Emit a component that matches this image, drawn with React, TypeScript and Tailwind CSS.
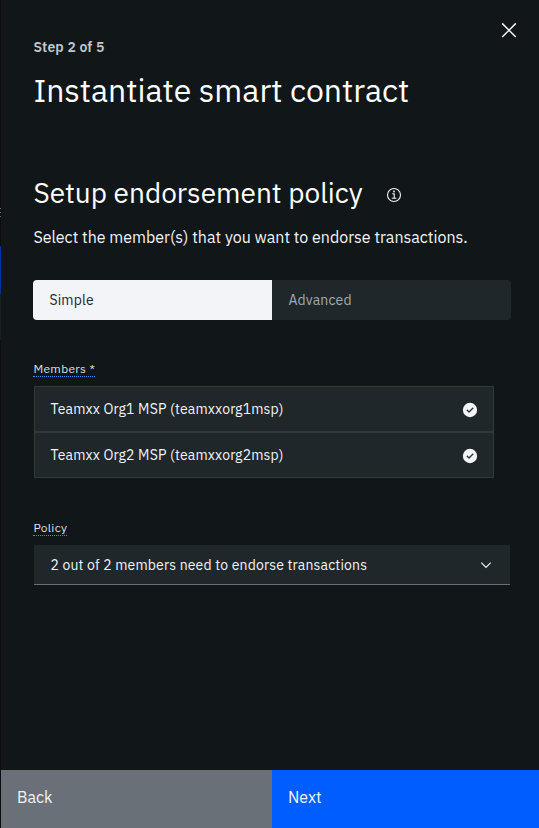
import React from "react";

function CheckmarkFilled() {
  return (
    <svg width="16" height="16" viewBox="0 0 32 32" className="mt-[2px] shrink-0">
      <circle cx="16" cy="16" r="14.3" fill="#f2f4f8" />
      <path d="M14 21.6l-5-5 1.6-1.6 3.4 3.4 7.4-7.4 1.6 1.6z" fill="#21272a" stroke="#21272a" strokeWidth=".5" />
    </svg>
  );
}

function Member({ name }: { name: string }) {
  return (
    <div className="flex h-[46px] items-center justify-between border border-[#32393d] bg-[#20272a] pl-[15.4px] pr-[15px]">
      <span className="text-sm tracking-[0.16px]">{name}</span>
      <CheckmarkFilled />
    </div>
  );
}

function PageEdge() {
  return (
    <div className="flex w-px shrink-0 flex-col bg-[#0a0c0e]">
      <div className="mt-[208px] h-px bg-[#6b7076]" />
      <div className="mt-[3px] h-px bg-[#6b7076]" />
      <div className="mt-[3px] h-px bg-[#6b7076]" />
      <div className="mt-[29px] h-[48px] bg-[#00309a]" />
      <div className="h-[46px] bg-[#1a1e21]" />
    </div>
  );
}

export default function App() {
  return (
    <div className="flex h-[828px] w-[539px] overflow-hidden bg-[#111618] font-['IBM_Plex_Sans',Roboto,sans-serif] text-[#f2f4f8]">
      <PageEdge />
      <main className="flex min-w-0 flex-1 flex-col">
        <header className="flex h-[175px] shrink-0 justify-between pl-[32.4px]">
          <div className="pt-[38px]">
            <p className="text-sm leading-[18px] font-semibold tracking-[0.16px] text-[#c1c7cd]">Step 2 of 5</p>
            <h1 className="mt-[14px] text-[32px] leading-10 whitespace-nowrap text-white">Instantiate smart contract</h1>
          </div>
          <button aria-label="Close" className="mt-[20px] mr-[20px] size-5">
            <svg width="20" height="20" viewBox="0 0 20 20" stroke="#f2f4f8" strokeWidth="1.5" fill="none">
              <path d="M3.2 3.4l13.6 13.6M16.8 3.4L3.2 17" />
            </svg>
          </button>
        </header>
        <section className="flex-1 pr-7 pl-8">
          <div className="flex h-9 items-center">
            <h2 className="w-[329px] pl-[0.4px] text-[28px] leading-9 whitespace-nowrap text-white">Setup endorsement policy</h2>
            <svg width="16" height="16" viewBox="0 0 16 16" className="mt-[3px] ml-6" fill="none" stroke="#f2f4f8" strokeWidth="1.1">
              <circle cx="8" cy="8" r="6.5" />
              <path d="M6.2 6.8H8.2V11.2M5.8 11.3H10.4" />
              <circle cx="8" cy="4.5" r=".9" fill="#f2f4f8" stroke="none" />
            </svg>
          </div>
          <p className="mt-[14px] pl-[0.4px] text-base leading-6 whitespace-nowrap">Select the member(s) that you want to endorse transactions.</p>
          <div className="mt-[31px] flex h-10 overflow-hidden rounded text-sm tracking-[0.16px]">
            <button className="flex flex-1 items-center bg-[#f2f4f8] pl-[16.4px] text-[#21272a]"><span>Simple</span></button>
            <button className="flex flex-1 items-center bg-[#20272a] pl-[16.4px] text-[#a2a9b0]"><span>Advanced</span></button>
          </div>
          <div className="mt-[41px] flex h-4 items-start pl-[0.4px]">
            <span className="border-b border-dotted border-[#4589ff] text-xs leading-[15px] tracking-[0.32px] text-[#dde1e6]">Members *</span>
          </div>
          <div className="mt-[9px] ml-px w-[460px]">
            <Member name="Teamxx Org1 MSP (teamxxorg1msp)" />
            <Member name="Teamxx Org2 MSP (teamxxorg2msp)" />
          </div>
          <div className="mt-[42px] flex h-4 items-start pl-[0.4px]">
            <span className="border-b border-dotted border-[#4589ff] text-xs leading-[15px] tracking-[0.32px] text-[#dde1e6]">Policy</span>
          </div>
          <div className="mt-[9px] ml-px flex h-10 w-[476px] items-center justify-between border-b border-[#697077] bg-[#20272a] pr-4 pl-[16.4px] text-sm tracking-[0.16px]">
            <span>2 out of 2 members need to endorse transactions</span>
            <svg width="16" height="16" viewBox="0 0 16 16" fill="none" stroke="#f2f4f8" strokeWidth="1.1">
              <path d="M3.3 5.7L8 10.4l4.7-4.7" />
            </svg>
          </div>
        </section>
        <footer className="flex h-[58px] shrink-0 text-base leading-6">
          <button className="flex w-[271px] items-start bg-[#697077] pt-[15px] pl-4"><span>Back</span></button>
          <button className="flex flex-1 items-start bg-[#005dff] pt-[15px] pl-4"><span>Next</span></button>
        </footer>
      </main>
    </div>
  );
}
